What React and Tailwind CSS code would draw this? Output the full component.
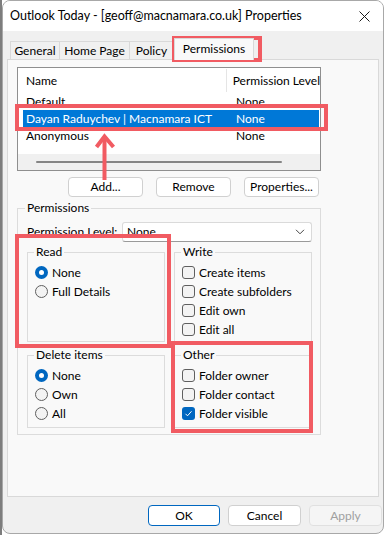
import React from 'react';

const Radio = ({ checked }) =>
  checked ? (
    <span className="w-[13px] h-[13px] rounded-full bg-[#0067c0] flex items-center justify-center shrink-0">
      <span className="w-[5px] h-[5px] rounded-full bg-white" />
    </span>
  ) : (
    <span className="w-[13px] h-[13px] rounded-full border border-[#5f5f5f] bg-[#f3f3f3] shrink-0" />
  );

const Check = ({ checked }) =>
  checked ? (
    <span className="w-[13px] h-[13px] rounded-[3px] bg-[#0067c0] flex items-center justify-center shrink-0">
      <svg width="9" height="9" viewBox="0 0 9 9" fill="none">
        <path d="M1.5 4.8l2 2 4-4.5" stroke="white" strokeWidth="1" />
      </svg>
    </span>
  ) : (
    <span className="w-[13px] h-[13px] rounded-[3px] border border-[#5f5f5f] bg-[#f3f3f3] shrink-0" />
  );

const Row = ({ children, label }) => (
  <div className="flex items-center h-[19px] gap-[4px] whitespace-nowrap">
    {children}
    <span>{label}</span>
  </div>
);

const Group = ({ title, children, pb }) => (
  <fieldset className={`border border-[#dcdcdc] ${pb}`}>
    <legend className="ml-[6px] px-[2px] leading-[16px]">{title}</legend>
    <div className="mt-[3px] px-[7px]">{children}</div>
  </fieldset>
);

const Button = ({ children, className = '' }) => (
  <div className={`h-[20px] bg-white border border-[#d0d0d0] rounded-[4px] flex items-center justify-center ${className}`}>
    {children}
  </div>
);

export default function App() {
  return (
    <div className="relative w-[388px] h-[535px] bg-white overflow-hidden text-[12px] text-black font-['Lato',sans-serif]">
      <div className="flex h-full">
        <div className="w-[2px] h-full bg-[#7d7d7d]" />
        <div className="w-[382px] h-[534px] border border-[#a8a8a8] rounded-[8px] bg-[#f0f0f0] flex flex-col overflow-hidden">
          {/* title bar */}
          <div className="h-[30px] bg-white flex items-center justify-between pl-[7px] pr-[4px]">
            <span className="text-[12.5px]">Outlook Today - [geoff@macnamara.co.uk] Properties</span>
            <div className="w-[30px] h-[30px] flex items-center justify-center">
              <svg width="11" height="11" viewBox="0 0 11 11">
                <path d="M0.5 0.5l10 10M10.5 0.5l-10 10" stroke="#1a1a1a" strokeWidth="1" />
              </svg>
            </div>
          </div>

          {/* tabs */}
          <div className="h-[28px] flex items-end pl-[7px] whitespace-nowrap">
            <div className="w-[50px] h-[18px] border border-b-0 border-[#d9d9d9] flex items-center justify-center">General</div>
            <div className="w-[70px] h-[18px] border border-l-0 border-b-0 border-[#d9d9d9] flex items-center justify-center">Home Page</div>
            <div className="w-[44px] h-[18px] border border-l-0 border-b-0 border-[#d9d9d9] flex items-center justify-center">Policy</div>
            <div className="relative z-10 -mb-px w-[80px] h-[22px] border border-b-0 border-[#d9d9d9] bg-[#f9f9f9] flex items-center justify-center pb-[2px]">Permissions</div>
          </div>

          {/* tab page */}
          <div className="mx-[4px] h-[438px] border border-[#d9d9d9] bg-[#f9f9f9] pl-[9px] pt-[7px]">
            <div className="w-[304px]">
              {/* list view */}
              <div className="h-[104px] border border-[#8f8f8f] bg-white overflow-hidden whitespace-nowrap">
                <div className="h-[25px] flex items-center">
                  <div className="w-[210px] pl-[8px]">Name</div>
                  <div className="w-px h-[23px] bg-[#e5e5e5]" />
                  <div className="pl-[6px]">Permission Level</div>
                </div>
                <div className="pl-[5px] pr-[1px]">
                  <div className="h-[17px] flex items-center">
                    <div className="w-[213px] pl-[3px]">Default</div>
                    <div>None</div>
                  </div>
                  <div className="h-[17px] flex items-center bg-[#0078d7] text-white">
                    <div className="w-[213px] pl-[3px]">Dayan Raduychev | Macnamara ICT</div>
                    <div>None</div>
                  </div>
                  <div className="h-[17px] flex items-center">
                    <div className="w-[213px] pl-[3px]">Anonymous</div>
                    <div>None</div>
                  </div>
                </div>
                <div className="h-[10px]" />
                <div className="h-[16px] bg-[#f0f0f0] flex items-center pl-[18px]">
                  <div className="w-[246px] h-[2px] rounded-full bg-[#858585]" />
                </div>
              </div>

              {/* buttons */}
              <div className="mt-[6px] flex justify-end gap-[13px] pr-[2px]">
                <Button className="w-[75px]">Add...</Button>
                <Button className="w-[75px]">Remove</Button>
                <Button className="w-[75px]">Properties...</Button>
              </div>

              {/* permissions group */}
              <fieldset className="mt-[3px] border border-[#dcdcdc] pb-[6px]">
                <legend className="ml-[7px] px-[2px] leading-[16px]">Permissions</legend>
                <div className="pl-[9px] pr-[8px]">
                  <div className="mt-[6px] flex items-center whitespace-nowrap">
                    <span className="w-[95px]">Permission Level:</span>
                    <div className="w-[190px] h-[20px] bg-white border border-[#dadada] border-b-[#9a9a9a] rounded-[3px] flex items-center justify-between pl-[4px] pr-[6px]">
                      <span>None</span>
                      <svg width="10" height="6" viewBox="0 0 10 6" fill="none">
                        <path d="M1 0.8l4 4 4-4" stroke="#444" strokeWidth="1" />
                      </svg>
                    </div>
                  </div>

                  <div className="mt-[2px] grid grid-cols-[138px_138px] gap-x-[9px]">
                    <Group title="Read" pb="pb-[2px]">
                      <Row label="None"><Radio checked /></Row>
                      <Row label="Full Details"><Radio /></Row>
                    </Group>
                    <Group title="Write" pb="pb-[2px]">
                      <Row label="Create items"><Check /></Row>
                      <Row label="Create subfolders"><Check /></Row>
                      <Row label="Edit own"><Check /></Row>
                      <Row label="Edit all"><Check /></Row>
                    </Group>
                  </div>

                  <div className="mt-[5px] grid grid-cols-[138px_138px] gap-x-[9px]">
                    <Group title="Delete items" pb="pb-[4px]">
                      <Row label="None"><Radio checked /></Row>
                      <Row label="Own"><Radio /></Row>
                      <Row label="All"><Radio /></Row>
                    </Group>
                    <Group title="Other" pb="pb-[4px]">
                      <Row label="Folder owner"><Check /></Row>
                      <Row label="Folder contact"><Check /></Row>
                      <Row label="Folder visible"><Check checked /></Row>
                    </Group>
                  </div>
                </div>
              </fieldset>
            </div>
          </div>

          {/* dialog buttons */}
          <div className="mt-[8px] flex justify-end gap-[8px] pr-[1px]">
            <div className="w-[72px] h-[21px] bg-white border border-[#0067c0] rounded-[4px] flex items-center justify-center">OK</div>
            <div className="w-[73px] h-[21px] bg-white border border-[#d0d0d0] rounded-[4px] flex items-center justify-center">Cancel</div>
            <div className="w-[73px] h-[21px] bg-[#f5f5f5] border border-[#e0e0e0] rounded-[4px] flex items-center justify-center text-[#a0a0a0]">Apply</div>
          </div>
        </div>
      </div>

      {/* annotations */}
      <div className="absolute left-[172px] top-[36px] w-[90px] h-[26px] border-[4px] border-[#f15b62]" />
      <div className="absolute left-[15px] top-[104px] w-[313px] h-[27px] border-[4px] border-[#f15b62]" />
      <div className="absolute left-[15px] top-[234px] w-[156px] h-[114px] border-[4px] border-[#f15b62]" />
      <div className="absolute left-[171px] top-[341px] w-[142px] h-[92px] border-[4px] border-[#f15b62]" />
      <svg className="absolute left-[90px] top-[130px]" width="30" height="52" viewBox="0 0 30 52" fill="none">
        <path d="M14.5 7V50" stroke="#f15b62" strokeWidth="4" />
        <path d="M6.5 17L14.5 6.5L23.5 17" stroke="#f15b62" strokeWidth="4" strokeLinejoin="miter" />
      </svg>
    </div>
  );
}
